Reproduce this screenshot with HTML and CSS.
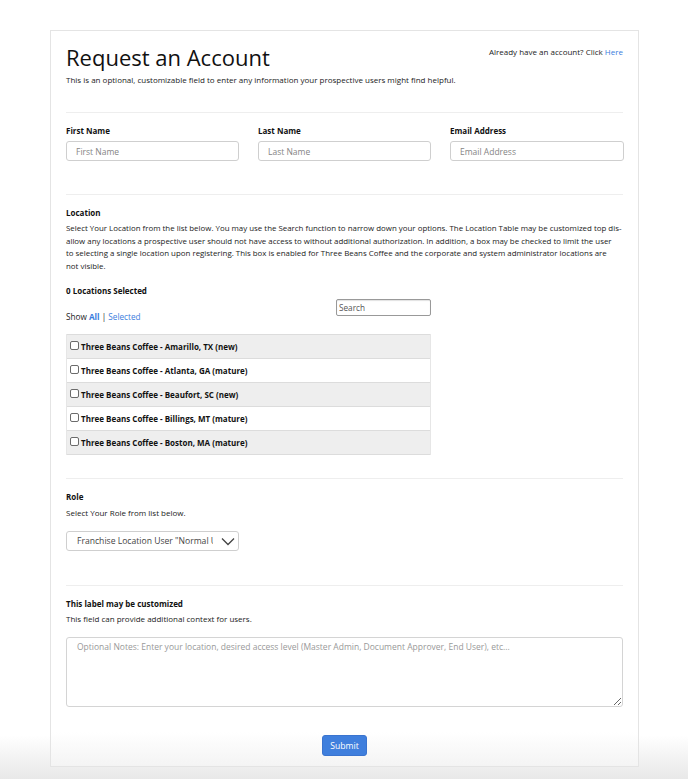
FILE: index.html
```html
<!DOCTYPE html>
<html lang="en">
<head>
<meta charset="utf-8">
<title>Request an Account</title>
<link rel="stylesheet" href="styles.css">
</head>
<body>
<div class="card">
  <section class="header">
    <div class="title-block">
      <h1 class="title">Request an Account</h1>
      <p class="subtitle">This is an optional, customizable field to enter any information your prospective users might find helpful.</p>
    </div>
    <p class="login">Already have an account? Click <a class="link" href="#">Here</a></p>
  </section>

  <section class="section names">
    <div class="field">
      <label class="label">First Name</label>
      <input class="input" type="text" placeholder="First Name">
    </div>
    <div class="field">
      <label class="label">Last Name</label>
      <input class="input" type="text" placeholder="Last Name">
    </div>
    <div class="field">
      <label class="label">Email Address</label>
      <input class="input" type="text" placeholder="Email Address">
    </div>
  </section>

  <section class="section location">
    <div class="label">Location</div>
    <p class="para">Select Your Location from the list below. You may use the Search function to narrow down your options. The Location Table may be customized top dis-allow any locations a prospective user should not have access to without additional authorization. In addition, a box may be checked to limit the user to&nbsp;selecting a single location upon registering. This box is enabled for Three Beans Coffee and the corporate and system administrator locations are not&nbsp;visible.</p>
    <div class="label count">0 Locations Selected</div>
    <div class="loc-area">
      <div class="loc-tools">
        <div class="show">Show <a class="link bold" href="#">All</a> | <a class="link" href="#">Selected</a></div>
        <input class="search" type="text" placeholder="Search">
      </div>
      <div class="loc-list">
        <div class="loc-row"><span class="cb"></span>Three Beans Coffee - Amarillo, TX (new)</div>
        <div class="loc-row"><span class="cb"></span>Three Beans Coffee - Atlanta, GA (mature)</div>
        <div class="loc-row"><span class="cb"></span>Three Beans Coffee - Beaufort, SC (new)</div>
        <div class="loc-row"><span class="cb"></span>Three Beans Coffee - Billings, MT (mature)</div>
        <div class="loc-row"><span class="cb"></span>Three Beans Coffee - Boston, MA (mature)</div>
        <div class="loc-row"><span class="cb"></span>Three Beans Coffee - Boulder, CO (new)</div>
      </div>
    </div>
  </section>

  <section class="section role">
    <div class="label">Role</div>
    <p class="desc">Select Your Role from list below.</p>
    <div class="select">
      <span class="select-text">Franchise Location User "Normal User"</span>
      <svg class="chev" width="14" height="9" viewBox="0 0 14 9"><path d="M1 1.5 L7 7.5 L13 1.5" fill="none" stroke="#444" stroke-width="1.3"/></svg>
    </div>
  </section>

  <section class="section notes">
    <div class="label">This label may be customized</div>
    <p class="desc">This field can provide additional context for users.</p>
    <textarea class="textarea" placeholder="Optional Notes: Enter your location, desired access level (Master Admin, Document Approver, End User), etc..."></textarea>
    <div class="actions"><button class="submit" type="button">Submit</button></div>
  </section>
</div>
</body>
</html>
```

FILE: styles.css
```css
html, body {
  margin: 0;
  padding: 0;
}
body {
  width: 688px;
  height: 779px;
  overflow: hidden;
  font-family: "Open Sans", "Liberation Sans", sans-serif;
  font-size: 8px;
  color: #222;
  background: linear-gradient(to bottom, #fff 0, #fff 735px, #e8e8e8 779px);
}
.card {
  box-sizing: border-box;
  width: 589px;
  height: 737px;
  margin: 30px 0 0 50px;
  border: 1px solid #e4e4e4;
  padding: 0 15px;
  background: linear-gradient(to bottom, #fff 0, #fff calc(100% - 34px), #f4f4f4 100%);
}
.header {
  display: flex;
  justify-content: space-between;
  align-items: flex-start;
  padding-top: 12px;
  height: 69px;
  border-bottom: 1px solid #eee;
}
.title {
  margin: 0;
  font-size: 22px;
  font-weight: 400;
  line-height: 28px;
  color: #111;
}
.subtitle {
  margin: 3px 0 0;
  line-height: 12px;
}
.login {
  margin: 3px 0 0;
  line-height: 12px;
}
.link {
  color: #3b7ddd;
  text-decoration: none;
}
.bold {
  font-weight: 700;
}
.section {
  border-bottom: 1px solid #eee;
  padding-top: 12px;
}
.label {
  display: block;
  font-weight: 700;
  line-height: 12px;
  color: #111;
}
.names {
  display: grid;
  grid-template-columns: 173px 173px 174px;
  column-gap: 19px;
  height: 69px;
}
.field .label {
  margin-bottom: 4px;
}
.input {
  box-sizing: border-box;
  display: block;
  width: 100%;
  height: 20px;
  border: 1px solid #cfcfcf;
  border-radius: 3px;
  padding: 0 9px;
  font-family: inherit;
  font-size: 8.5px;
  color: #333;
}
.input::placeholder {
  color: #858585;
}
.location {
  height: 271px;
}
.para {
  margin: 3px 0 0;
  font-size: 7.9px;
  line-height: 12.7px;
}
.count {
  margin-top: 12px;
}
.loc-area {
  width: 365px;
}
.loc-tools {
  display: flex;
  justify-content: space-between;
  align-items: flex-start;
  margin-top: 2px;
  height: 25px;
}
.show {
  margin-top: 12px;
  line-height: 12px;
  font-size: 8.2px;
}
.search {
  box-sizing: border-box;
  width: 95px;
  height: 17px;
  border: 1px solid #999;
  border-radius: 2px;
  padding: 0 2px;
  font-family: inherit;
  font-size: 8.2px;
  box-shadow: inset 0 1px 1px rgba(0,0,0,0.12);
}
.search::placeholder {
  color: #555;
}
.loc-list {
  margin-top: 10px;
  height: 121px;
  overflow: hidden;
  border-left: 1px solid #e6e6e6;
  border-right: 1px solid #e6e6e6;
}
.loc-row {
  display: flex;
  align-items: center;
  height: 23px;
  padding-left: 2px;
  border-top: 1px solid #dcdcdc;
  font-weight: 700;
  color: #111;
  background: #fff;
}
.loc-row:nth-child(odd) {
  background: #eeeeee;
}
.cb {
  box-sizing: border-box;
  width: 9px;
  height: 9px;
  margin: 0 2px 0 1px;
  border: 1px solid #6b6b6b;
  border-radius: 2px;
  background: #fff;
  position: relative;
  top: -1px;
}
.role {
  height: 94px;
}
.desc {
  margin: 4px 0 0;
  line-height: 12px;
}
.select {
  box-sizing: border-box;
  display: flex;
  align-items: center;
  justify-content: space-between;
  width: 173px;
  height: 20px;
  margin-top: 12px;
  padding: 0 2px 0 10px;
  border: 1px solid #cfcfcf;
  border-radius: 3px;
  color: #444;
  font-size: 8.6px;
}
.select-text {
  width: 136px;
  overflow: hidden;
  white-space: nowrap;
}
.chev {
  margin-right: 1px;
}
.notes {
  border-bottom: none;
}
.notes .desc {
  margin-top: 3px;
}
.textarea {
  box-sizing: border-box;
  display: block;
  width: 557px;
  height: 70px;
  margin-top: 12px;
  border: 1px solid #d4d4d4;
  border-radius: 3px;
  padding: 3px 10px;
  font-family: inherit;
  font-size: 8.5px;
  line-height: 12px;
  resize: vertical;
  background: #fff;
}
.textarea::placeholder {
  color: #999;
}
.actions {
  display: flex;
  justify-content: center;
  margin-top: 28px;
}
.submit {
  box-sizing: border-box;
  width: 45px;
  height: 21px;
  border: 1px solid #3a74cf;
  border-radius: 3px;
  background: #3f7fdd;
  color: #fff;
  font-family: inherit;
  font-size: 8.6px;
  padding: 0;
}
```
